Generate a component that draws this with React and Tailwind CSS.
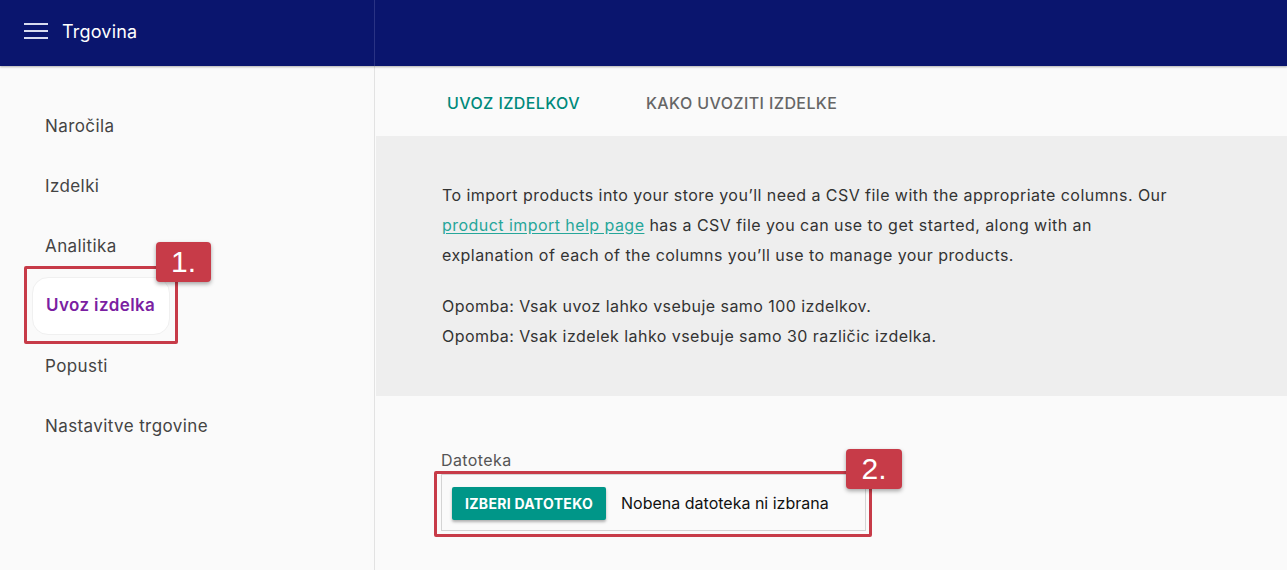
import React from 'react';

const navItems = ['Naročila', 'Izdelki', 'Analitika', 'Uvoz izdelka', 'Popusti', 'Nastavitve trgovine'];

const App = () => {
  return (
    <div className="h-[570px] w-full overflow-hidden flex flex-col bg-[#fafafa] text-[#333]" style={{ fontFamily: 'Inter, "Noto Sans", sans-serif' }}>
      {/* top bar */}
      <header className="h-[66px] flex bg-[#0a156e] shadow-[0_1px_2px_rgba(0,0,0,0.3)] relative z-10">
        <div className="w-[375px] flex items-center border-r border-[#2a3384] pl-[24px] pb-[4px]">
          <div className="flex flex-col gap-[5px] w-[24px]">
            <span className="block h-[2px] bg-[#d8dbef]" />
            <span className="block h-[2px] bg-[#d8dbef]" />
            <span className="block h-[2px] bg-[#d8dbef]" />
          </div>
          <span className="ml-[14px] text-white text-[18px] tracking-[0.2px]">Trgovina</span>
        </div>
        <div className="flex-1" />
      </header>

      <div className="flex flex-1 relative">
        {/* sidebar */}
        <aside className="w-[375px] border-r border-[#e2e2e2] pt-[30px] pl-[32px] relative">
          {navItems.map((item) => {
            const active = item === 'Uvoz izdelka';
            return (
              <div key={item} className="h-[60px] flex items-center">
                <div
                  className={
                    active
                      ? 'h-[58px] w-[138px] flex items-center px-[13px] rounded-[16px] bg-white border border-[#f0f0f0] text-[#7b1fa2] font-semibold text-[17px] tracking-[0.4px]'
                      : 'px-[13px] pt-[2px] text-[#444] text-[17px] tracking-[0.4px]'
                  }
                >
                  {item}
                </div>
              </div>
            );
          })}

          {/* annotation 1 */}
          <div className="absolute left-[24px] top-[200px] w-[154px] h-[78px] border-[3px] border-[#c73b48] rounded-[2px] pointer-events-none" />
          <div className="absolute left-[156px] top-[176px] w-[55px] h-[40px] bg-[#c73b48] rounded-[4px] shadow-[0_2px_4px_rgba(0,0,0,0.35)] flex items-center justify-center text-white text-[30px] leading-none" style={{ fontFamily: '"Liberation Sans", Arial, sans-serif' }}>
            1.
          </div>
        </aside>

        {/* main */}
        <main className="flex-1 flex flex-col">
          <div className="h-[70px] flex items-center pt-[4px] text-[16px] font-medium tracking-[0.4px]">
            <span className="ml-[72px] text-[#00897b]">UVOZ IZDELKOV</span>
            <span className="ml-[66px] text-[#666]">KAKO UVOZITI IZDELKE</span>
          </div>

          <section className="h-[260px] bg-[#eeeeee] ml-[1px] pl-[66px] pr-[100px] pt-[44px] text-[16px] leading-[30px] tracking-[0.45px] text-[#333]">
            <p>
              To import products into your store you’ll need a CSV file with the appropriate columns. Our{' '}
              <a href="#" className="text-[#26a69a] underline underline-offset-2">product import help page</a>{' '}
              has a CSV file you can use to get started, along with an explanation of each of the columns you’ll use to manage your products.
            </p>
            <p className="mt-[21px]">Opomba: Vsak uvoz lahko vsebuje samo 100 izdelkov.</p>
            <p>Opomba: Vsak izdelek lahko vsebuje samo 30 različic izdelka.</p>
          </section>

          <div className="pl-[66px] pt-[53px] relative">
            <div className="text-[16px] text-[#555] leading-[22px] tracking-[0.4px]">Datoteka</div>
            <div className="mt-[3px] w-[425px] h-[57px] border border-[#d4d4d4] flex items-center pl-[10px] pt-[1px]">
              <button className="h-[33px] px-[13px] bg-[#009688] text-white text-[14px] font-bold tracking-[0.3px] rounded-[2px] shadow-[0_2px_3px_rgba(0,0,0,0.3)]">
                IZBERI DATOTEKO
              </button>
              <span className="ml-[15px] text-[16px] text-[#111]">Nobena datoteka ni izbrana</span>
            </div>

            {/* annotation 2 */}
            <div className="absolute left-[59px] top-[75px] w-[438px] h-[66px] border-[3px] border-[#c73b48] rounded-[2px] pointer-events-none" />
            <div className="absolute left-[471px] top-[53px] w-[56px] h-[40px] bg-[#c73b48] rounded-[4px] shadow-[0_2px_4px_rgba(0,0,0,0.35)] flex items-center justify-center text-white text-[30px] leading-none" style={{ fontFamily: '"Liberation Sans", Arial, sans-serif' }}>
              2.
            </div>
          </div>
        </main>
      </div>
    </div>
  );
};

export default App;
